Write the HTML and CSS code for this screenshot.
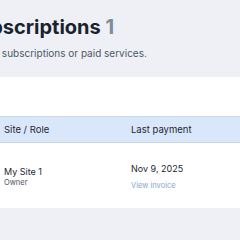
FILE: index.html
```html
<!DOCTYPE html>
<html lang="en">

<head>
    <meta charset="UTF-8">
    <meta name="viewport" content="width=device-width, initial-scale=1.0">
    <title>My Subscriptions</title>
    <link rel="stylesheet" href="styles.css">
</head>

<body>
    <div class="page">
        <header class="page-header">
            <h1>My Subscriptions <span class="count">1</span></h1>
            <p class="subtitle">Manage your subscriptions or paid services.</p>
        </header>

        <div class="card">
            <table class="subs-table">
                <thead>
                    <tr>
                        <th class="col-site">Site / Role</th>
                        <th class="col-pay">Last payment</th>
                    </tr>
                </thead>
                <tbody>
                    <tr>
                        <td class="col-site">
                            <div class="site-name">My Site 1</div>
                            <div class="site-role">Owner</div>
                        </td>
                        <td class="col-pay">
                            <div class="pay-date">Nov 9, 2025</div>
                            <a class="invoice-link" href="#">View invoice</a>
                        </td>
                    </tr>
                </tbody>
            </table>
        </div>
    </div>
</body>

</html>
```

FILE: styles.css
```css
body {
    margin: 0;
    font-family: Inter, "Noto Sans", sans-serif;
    background-color: #eef0f5;
    overflow: hidden;
}

.page {
    margin-left: -63px;
    width: 420px;
}

.page-header {
    padding: 15px 0 18px 0;
}

.page-header h1 {
    margin: 0 0 0 -8px;
    font-size: 20px;
    line-height: 24px;
    font-weight: 700;
    color: #19232f;
}

.count {
    color: #7e8b9b;
}

.subtitle {
    margin: 8px 0 0 0;
    font-size: 10px;
    line-height: 12px;
    color: #4d5866;
}

.card {
    background-color: #fff;
    padding-top: 39px;
    height: 131px;
    box-sizing: border-box;
    overflow: hidden;
}

.subs-table {
    width: 100%;
    border-collapse: collapse;
}

.subs-table th {
    text-align: left;
    font-weight: 400;
    font-size: 9.5px;
    color: #1c2733;
    background-color: #dae7fb;
    border-top: 1px solid #c9d7ec;
    border-bottom: 1px solid #c9d7ec;
    height: 25px;
    padding: 0;
}

.subs-table td {
    vertical-align: top;
    padding: 23px 0 0 0;
}

.subs-table .col-site {
    padding-left: 67px;
    width: 127px;
}

.site-name,
.pay-date {
    font-size: 9px;
    line-height: 11px;
    color: #1c2733;
}

.pay-date {
    margin-top: -3px;
}

.site-role {
    font-size: 7.5px;
    line-height: 9px;
    color: #4a5462;
    margin-top: 1px;
}

.invoice-link {
    display: block;
    margin-top: 7px;
    font-size: 7.5px;
    line-height: 9px;
    color: #8aa6ca;
    text-decoration: none;
}
```
